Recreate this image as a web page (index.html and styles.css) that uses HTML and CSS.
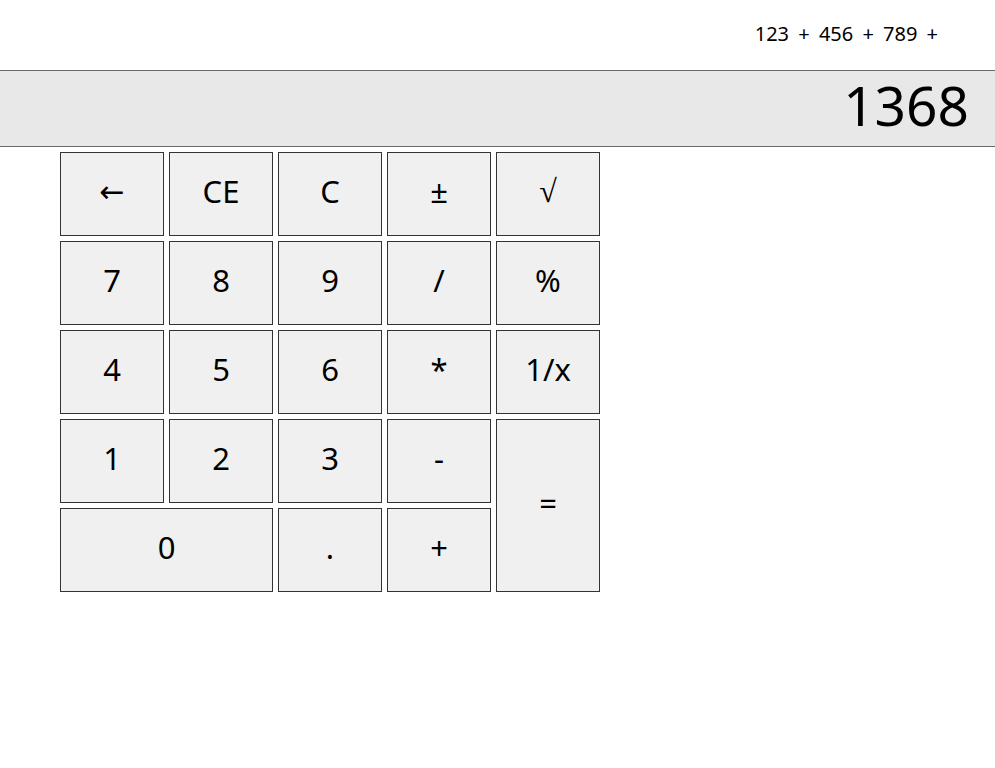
FILE: index.html
```html
<!DOCTYPE html>
<html>
<head>
<meta charset="utf-8">
<link rel="stylesheet" href="styles.css">
</head>
<body>
<div class="calc">
  <div class="expr">123 + 456 + 789 +</div>
  <div class="display">1368</div>
  <div class="keys">
    <button class="key key-arrow">←</button>
    <button class="key">CE</button>
    <button class="key">C</button>
    <button class="key">±</button>
    <button class="key key-root">√</button>
    <button class="key">7</button>
    <button class="key">8</button>
    <button class="key">9</button>
    <button class="key">/</button>
    <button class="key">%</button>
    <button class="key">4</button>
    <button class="key">5</button>
    <button class="key">6</button>
    <button class="key">*</button>
    <button class="key">1/x</button>
    <button class="key">1</button>
    <button class="key">2</button>
    <button class="key">3</button>
    <button class="key">-</button>
    <button class="key key-eq">=</button>
    <button class="key key-zero">0</button>
    <button class="key">.</button>
    <button class="key">+</button>
  </div>
</div>
</body>
</html>
```
FILE: styles.css
```css
html, body {
  margin: 0;
  padding: 0;
  background: #ffffff;
}
body {
  font-family: "Noto Sans", "Open Sans", "DejaVu Sans", sans-serif;
  color: #000;
}
.expr {
  height: 70px;
  box-sizing: border-box;
  text-align: right;
  padding: 21px 57px 0 0;
  font-size: 20px;
  line-height: 26px;
  word-spacing: 4px;
}
.display {
  height: 77px;
  box-sizing: border-box;
  border-top: 1px solid #6a6a6a;
  border-bottom: 1px solid #6a6a6a;
  background: #e8e8e8;
  text-align: right;
  padding: 0 26px 0 0;
  font-size: 55px;
  line-height: 68px;
}
.keys {
  display: grid;
  grid-template-columns: repeat(5, 104px);
  grid-template-rows: repeat(5, 84px);
  gap: 5px;
  margin: 5px 0 0 60px;
}
.key {
  box-sizing: border-box;
  margin: 0;
  padding: 0 0 6px 0;
  border: 1px solid #333;
  background: #f0f0f0;
  font-family: "Noto Sans", "Open Sans", "DejaVu Sans", sans-serif;
  font-size: 31px;
  color: #000;
  border-radius: 0;
}
.key.key-arrow {
  font-family: "DejaVu Sans", sans-serif;
  font-size: 30px;
}
.key.key-root {
  font-family: "Liberation Serif", "DejaVu Serif", serif;
  font-size: 32px;
}
.key-eq {
  grid-column: 5;
  grid-row: 4 / span 2;
}
.key-zero {
  grid-column: 1 / span 2;
}
```
